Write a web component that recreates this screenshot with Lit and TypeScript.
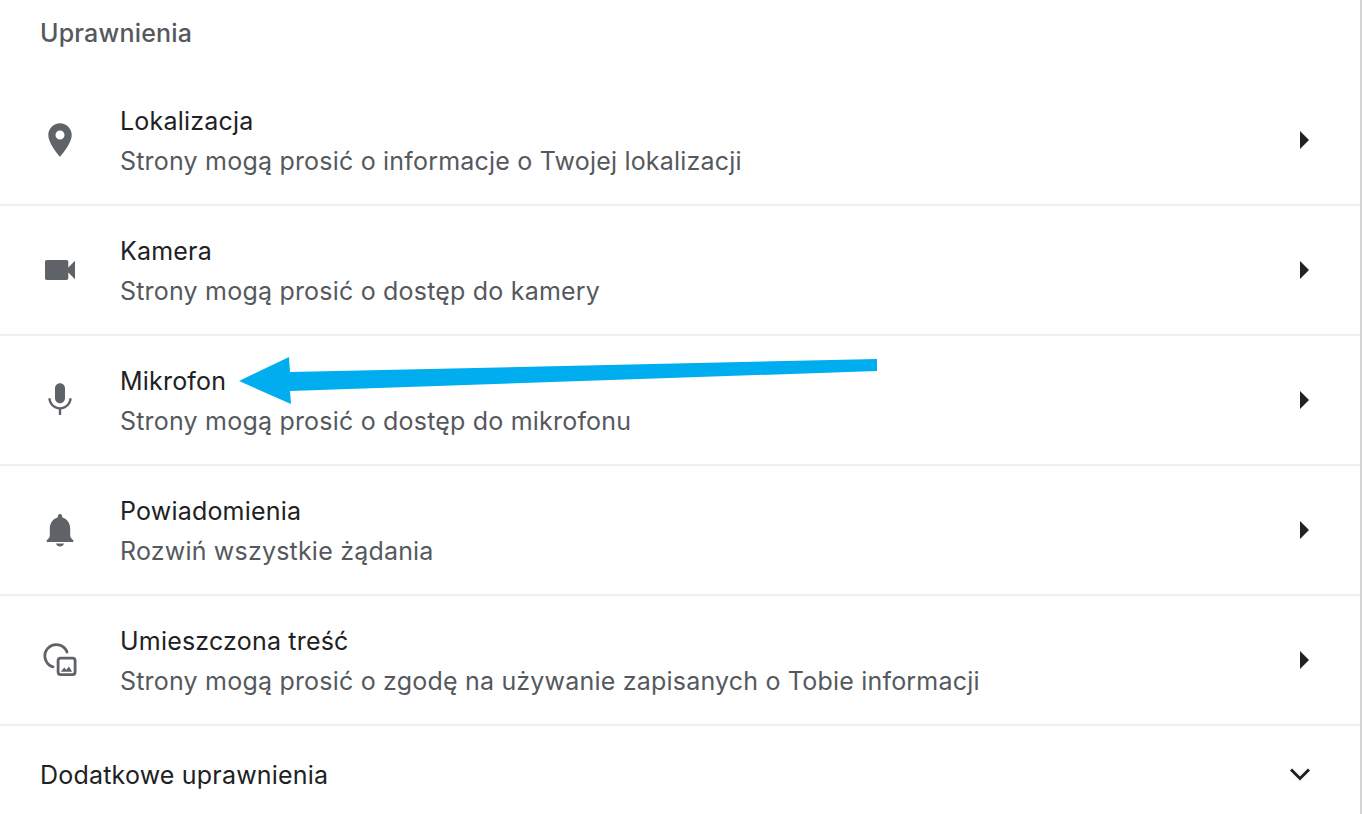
import { LitElement, html, css, svg } from "lit";
import { customElement } from "lit/decorators.js";

const ICONS = {
  pin: svg`<path d="M20 3.3C13.55 3.3 8.3 8.55 8.3 15c0 8.75 11.7 21.7 11.7 21.7S31.7 23.75 31.7 15C31.700 8.55 26.450 3.3 20 3.3zm0 16.200a4.500 4.500 0 1 1 0-9 4.500 4.500 0 0 1 0 9z"/>`,
  cam: svg`<path d="M28.300 17.500V11.700c0-.92-.75-1.700-1.700-1.700H6.700C5.750 10 5 10.780 5 11.700v16.600c0 .92.75 1.700 1.700 1.700h19.900c.95 0 1.700-.78 1.700-1.700v-5.800L35 29.200V10.800l-6.700 6.700z"/>`,
  mic: svg`<path d="M20 23.300c2.770 0 4.980-2.230 4.980-5L25 8.300c0-2.770-2.230-5-5-5s-5 2.230-5 5v10c0 2.770 2.230 5 5 5zm9.300-5c0 5-4.700 9-9.300 9s-9.300-4-9.300-9H8.300c0 5.680 4.530 10.380 10.500 11.200V35h2.400v-5.500c5.970-.8 10.500-5.500 10.500-11.200h-2.400z"/>`,
  bell: svg`<path d="M20 4c-1.300 0-2.200 1-2.200 2.300v1.200C13 8.800 9.800 13 9.800 18.500v7.500c0 1-1 2.500-3.100 4.200V32h26.600v-1.800c-2.100-1.700-3.100-3.200-3.100-4.200v-7.500c0-5.500-3.200-9.700-8-11V6.300C22.200 5 21.300 4 20 4zM16 33.500h8c-.5 2-2 3-4 3s-3.500-1-4-3z"/>`,
  embed: svg`<path d="M27 12.100A11.400 11.400 0 1 0 13 26.900" fill="none" stroke="currentColor" stroke-width="2.800" stroke-linecap="round"/><rect x="18.100" y="18.100" width="17" height="16.500" rx="2.500" fill="none" stroke="currentColor" stroke-width="2.800"/><path d="M20.800 31.800l3.400-4.300 2.200 2.300 2.600-3.400 3.200 5.400z"/>`,
};

type Row = { icon: keyof typeof ICONS; title: string; sub: string };

const ROWS: Row[] = [
  { icon: "pin", title: "Lokalizacja", sub: "Strony mogą prosić o informacje o Twojej lokalizacji" },
  { icon: "cam", title: "Kamera", sub: "Strony mogą prosić o dostęp do kamery" },
  { icon: "mic", title: "Mikrofon", sub: "Strony mogą prosić o dostęp do mikrofonu" },
  { icon: "bell", title: "Powiadomienia", sub: "Rozwiń wszystkie żądania" },
  { icon: "embed", title: "Umieszczona treść", sub: "Strony mogą prosić o zgodę na używanie zapisanych o Tobie informacji" },
];

@customElement("app-root")
export class AppRoot extends LitElement {
  static styles = css`
    :host {
      display: block;
      height: 814px;
      overflow: hidden;
      background: #fff;
      font-family: Inter, "Liberation Sans", sans-serif;
      font-size: 25px;
      letter-spacing: 0.2px;
      position: relative;
    }
    .page {
      height: 814px;
      box-sizing: border-box;
      border-right: 2px solid #d4d4d4;
    }
    .head {
      height: 76px;
      box-sizing: border-box;
      padding: 13px 0 0 40px;
      line-height: 40px;
      color: #55595e;
      font-weight: 500;
    }
    .row {
      height: 130px;
      box-sizing: border-box;
      border-bottom: 2px solid #efefef;
      display: flex;
      align-items: center;
      padding: 0 49px 0 40px;
    }
    .icon {
      width: 40px;
      height: 40px;
      flex: none;
      margin-right: 40px;
      color: #5f6368;
      fill: currentColor;
      display: block;
    }
    .text {
      flex: 1;
      line-height: 40px;
      margin-top: 2px;
    }
    .title {
      color: #202124;
    }
    .sub {
      color: #55595e;
    }
    .tri {
      width: 9px;
      height: 18px;
      fill: #202124;
      flex: none;
      display: block;
      margin-right: 2px;
    }
    .more {
      display: flex;
      align-items: center;
      justify-content: space-between;
      padding: 29px 49px 0 40px;
      line-height: 40px;
      color: #202124;
    }
    .chev {
      width: 22px;
      height: 14px;
      margin-top: -2px;
      fill: none;
      stroke: #202124;
      stroke-width: 3;
      display: block;
    }
    .arrow {
      position: absolute;
      left: 0;
      top: 0;
      width: 1362px;
      height: 814px;
      pointer-events: none;
      fill: #00aeef;
    }
  `;

  render() {
    return html`
      <div class="page">
        <div class="head">Uprawnienia</div>
        ${ROWS.map(
          (r) => html`
            <div class="row">
              <svg class="icon" viewBox="0 0 40 40">${ICONS[r.icon]}</svg>
              <div class="text">
                <div class="title">${r.title}</div>
                <div class="sub">${r.sub}</div>
              </div>
              <svg class="tri" viewBox="0 0 9 18"><path d="M0 0l9 9-9 9z" /></svg>
            </div>
          `
        )}
        <div class="more">
          <span>Dodatkowe uprawnienia</span>
          <svg class="chev" viewBox="0 0 22 14"><path d="M2 2.500l9 9 9-9" /></svg>
        </div>
      </div>
      <svg class="arrow" viewBox="0 0 1362 814">
        <path d="M239 381L289 357L290 372L877 359L877 371L290 391L291 404Z" />
      </svg>
    `;
  }
}
